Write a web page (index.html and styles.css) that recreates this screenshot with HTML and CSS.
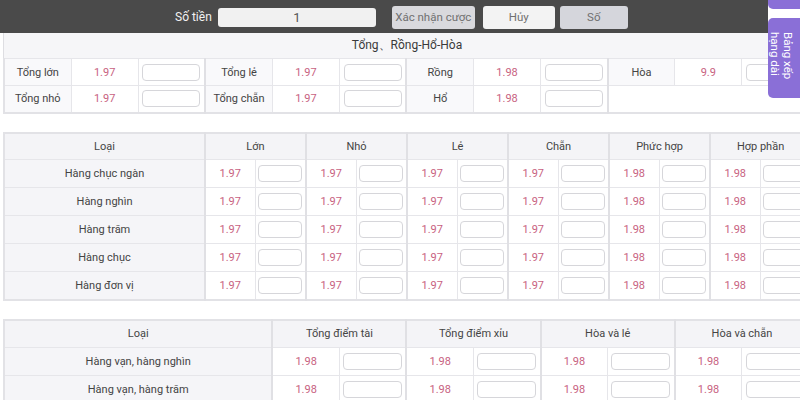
FILE: index.html
```html
<!DOCTYPE html>
<html lang="vi">
<head>
<meta charset="utf-8">
<title>Tổng、Rồng-Hổ-Hòa</title>
<link rel="stylesheet" href="styles.css">
</head>
<body>
<div class="topbar">
  <span class="money-label">Số tiền</span>
  <div class="money-input">1</div>
  <button class="btn btn-confirm">Xác nhận cược</button>
  <button class="btn btn-cancel">Hủy</button>
  <button class="btn btn-num">Số</button>
</div>

<div class="side-tabs">
  <div class="tab tab-top"></div>
  <div class="tab tab-rank">Bảng xếp<br>hạng dài</div>
</div>

<main class="content">
  <section class="block">
    <div class="block-title">Tổng、Rồng-Hổ-Hòa</div>
    <table class="grid grid-sum">
      <colgroup>
        <col class="c67"><col class="c67"><col class="c67">
        <col class="c67"><col class="c67"><col class="c67">
        <col class="c67"><col class="c67"><col class="c67">
        <col class="c67"><col class="c67"><col class="c67">
      </colgroup>
      <tr>
        <td class="lbl">Tổng lớn</td><td class="odds">1.97</td><td class="inp"><input class="bet-input" type="text"></td>
        <td class="lbl gs">Tổng lẻ</td><td class="odds">1.97</td><td class="inp"><input class="bet-input" type="text"></td>
        <td class="lbl gs">Rồng</td><td class="odds">1.98</td><td class="inp"><input class="bet-input" type="text"></td>
        <td class="lbl gs">Hòa</td><td class="odds">9.9</td><td class="inp"><input class="bet-input" type="text"></td>
      </tr>
      <tr>
        <td class="lbl">Tổng nhỏ</td><td class="odds">1.97</td><td class="inp"><input class="bet-input" type="text"></td>
        <td class="lbl gs">Tổng chẵn</td><td class="odds">1.97</td><td class="inp"><input class="bet-input" type="text"></td>
        <td class="lbl gs">Hổ</td><td class="odds">1.98</td><td class="inp"><input class="bet-input" type="text"></td>
        <td class="empty gs" colspan="3"></td>
      </tr>
    </table>
  </section>

  <section class="block">
    <table class="grid grid-pos">
      <colgroup>
        <col class="c201">
        <col class="c50"><col class="c51"><col class="c50"><col class="c51">
        <col class="c50"><col class="c51"><col class="c50"><col class="c51">
        <col class="c50"><col class="c51"><col class="c50"><col class="c51">
      </colgroup>
      <tr class="head">
        <th>Loại</th><th class="gs" colspan="2">Lớn</th><th class="gs" colspan="2">Nhỏ</th><th class="gs" colspan="2">Lẻ</th>
        <th class="gs" colspan="2">Chẵn</th><th class="gs" colspan="2">Phức hợp</th><th class="gs" colspan="2">Hợp phần</th>
      </tr>
      <tr>
        <td class="lbl">Hàng chục ngàn</td>
        <td class="odds gs">1.97</td><td class="inp"><input class="bet-input" type="text"></td>
        <td class="odds gs">1.97</td><td class="inp"><input class="bet-input" type="text"></td>
        <td class="odds gs">1.97</td><td class="inp"><input class="bet-input" type="text"></td>
        <td class="odds gs">1.97</td><td class="inp"><input class="bet-input" type="text"></td>
        <td class="odds gs">1.98</td><td class="inp"><input class="bet-input" type="text"></td>
        <td class="odds gs">1.98</td><td class="inp"><input class="bet-input" type="text"></td>
      </tr>
      <tr>
        <td class="lbl">Hàng nghìn</td>
        <td class="odds gs">1.97</td><td class="inp"><input class="bet-input" type="text"></td>
        <td class="odds gs">1.97</td><td class="inp"><input class="bet-input" type="text"></td>
        <td class="odds gs">1.97</td><td class="inp"><input class="bet-input" type="text"></td>
        <td class="odds gs">1.97</td><td class="inp"><input class="bet-input" type="text"></td>
        <td class="odds gs">1.98</td><td class="inp"><input class="bet-input" type="text"></td>
        <td class="odds gs">1.98</td><td class="inp"><input class="bet-input" type="text"></td>
      </tr>
      <tr>
        <td class="lbl">Hàng trăm</td>
        <td class="odds gs">1.97</td><td class="inp"><input class="bet-input" type="text"></td>
        <td class="odds gs">1.97</td><td class="inp"><input class="bet-input" type="text"></td>
        <td class="odds gs">1.97</td><td class="inp"><input class="bet-input" type="text"></td>
        <td class="odds gs">1.97</td><td class="inp"><input class="bet-input" type="text"></td>
        <td class="odds gs">1.98</td><td class="inp"><input class="bet-input" type="text"></td>
        <td class="odds gs">1.98</td><td class="inp"><input class="bet-input" type="text"></td>
      </tr>
      <tr>
        <td class="lbl">Hàng chục</td>
        <td class="odds gs">1.97</td><td class="inp"><input class="bet-input" type="text"></td>
        <td class="odds gs">1.97</td><td class="inp"><input class="bet-input" type="text"></td>
        <td class="odds gs">1.97</td><td class="inp"><input class="bet-input" type="text"></td>
        <td class="odds gs">1.97</td><td class="inp"><input class="bet-input" type="text"></td>
        <td class="odds gs">1.98</td><td class="inp"><input class="bet-input" type="text"></td>
        <td class="odds gs">1.98</td><td class="inp"><input class="bet-input" type="text"></td>
      </tr>
      <tr>
        <td class="lbl">Hàng đơn vị</td>
        <td class="odds gs">1.97</td><td class="inp"><input class="bet-input" type="text"></td>
        <td class="odds gs">1.97</td><td class="inp"><input class="bet-input" type="text"></td>
        <td class="odds gs">1.97</td><td class="inp"><input class="bet-input" type="text"></td>
        <td class="odds gs">1.97</td><td class="inp"><input class="bet-input" type="text"></td>
        <td class="odds gs">1.98</td><td class="inp"><input class="bet-input" type="text"></td>
        <td class="odds gs">1.98</td><td class="inp"><input class="bet-input" type="text"></td>
      </tr>
    </table>
  </section>

  <section class="block">
    <table class="grid grid-pair">
      <colgroup>
        <col class="c268">
        <col class="c67"><col class="c67"><col class="c67"><col class="c67">
        <col class="c67"><col class="c67"><col class="c67"><col class="c67">
      </colgroup>
      <tr class="head">
        <th>Loại</th><th class="gs" colspan="2">Tổng điểm tài</th><th class="gs" colspan="2">Tổng điểm xỉu</th>
        <th class="gs" colspan="2">Hòa và lẻ</th><th class="gs" colspan="2">Hòa và chẵn</th>
      </tr>
      <tr>
        <td class="lbl">Hàng vạn, hàng nghìn</td>
        <td class="odds gs">1.98</td><td class="inp"><input class="bet-input" type="text"></td>
        <td class="odds gs">1.98</td><td class="inp"><input class="bet-input" type="text"></td>
        <td class="odds gs">1.98</td><td class="inp"><input class="bet-input" type="text"></td>
        <td class="odds gs">1.98</td><td class="inp"><input class="bet-input" type="text"></td>
      </tr>
      <tr>
        <td class="lbl">Hàng vạn, hàng trăm</td>
        <td class="odds gs">1.98</td><td class="inp"><input class="bet-input" type="text"></td>
        <td class="odds gs">1.98</td><td class="inp"><input class="bet-input" type="text"></td>
        <td class="odds gs">1.98</td><td class="inp"><input class="bet-input" type="text"></td>
        <td class="odds gs">1.98</td><td class="inp"><input class="bet-input" type="text"></td>
      </tr>
    </table>
  </section>
</main>
</body>
</html>
```

FILE: styles.css
```css
html, body {
  margin: 0;
  padding: 0;
  background: #ffffff;
  overflow: hidden;
}

body {
  width: 800px;
  height: 400px;
  position: relative;
  font-family: Roboto, "Liberation Sans", sans-serif;
  font-size: 11px;
  color: #444444;
}

/* ---------- top bar ---------- */
.topbar {
  width: 768px;
  height: 33px;
  box-sizing: border-box;
  background: #4a4a4a;
  display: flex;
  align-items: center;
  padding: 1px 0 0 175px;
}

.money-label {
  font-size: 12px;
  color: #f2f2f2;
  margin-right: 6px;
}

.money-input {
  width: 158px;
  height: 19px;
  line-height: 19px;
  background: #f1f1f1;
  border-radius: 3px;
  text-align: center;
  font-size: 13px;
  color: #555;
  margin-right: 16px;
}

.btn {
  height: 23px;
  border: none;
  border-radius: 3px;
  font-family: Roboto, "Liberation Sans", sans-serif;
  font-size: 11.5px;
  color: #707070;
  padding: 0;
}

.btn-confirm {
  width: 83px;
  background: #d9d9dd;
  margin-right: 8px;
}

.btn-cancel {
  width: 72px;
  background: #f3f3f3;
  margin-right: 5px;
}

.btn-num {
  width: 68px;
  background: #d5d6dc;
}

/* ---------- side tabs ---------- */
.side-tabs {
  position: absolute;
  top: 0;
  right: 0;
  width: 32px;
  display: flex;
  flex-direction: column;
  gap: 9px;
}

.tab {
  background: #8a6fd7;
  border-radius: 5px 0 0 5px;
}

.tab-top {
  height: 9px;
  border-radius: 0 0 0 5px;
}

.tab-rank {
  height: 80px;
  box-sizing: border-box;
  writing-mode: vertical-rl;
  color: #ffffff;
  font-size: 11.5px;
  line-height: 13px;
  padding: 14px 6px 0 0;
}

/* ---------- content ---------- */
.content {
  margin-left: 3px;
  width: 807px;
}

.block + .block {
  margin-top: 18px;
}

.block-title {
  height: 25px;
  line-height: 25px;
  box-sizing: border-box;
  background: #f6f6f8;
  border-left: 1px solid #dedee2;
  text-align: center;
  font-size: 12px;
  color: #3a3a3a;
}

.grid {
  border-collapse: collapse;
  table-layout: fixed;
  width: 807px;
  border: 2px solid #e2e2e6;
}

.grid-sum {
  border-top: 1px solid #e2e2e6;
}

.c50 { width: 50px; }
.c51 { width: 51px; }
.c67 { width: 67px; }
.c201 { width: 201px; }
.c268 { width: 268px; }

.grid tr {
  height: 28px;
}

.grid-sum tr,
.grid-pos tr.head {
  height: 27px;
}

.grid th,
.grid td {
  border: 1px solid #e6e6ea;
  padding: 0;
  text-align: center;
  font-weight: normal;
  white-space: nowrap;
  overflow: hidden;
}

.grid th {
  background: #f4f4f7;
  color: #444444;
}

.grid .gs {
  border-left: 2px solid #e0e0e4;
}

.lbl {
  background: #f5f5f8;
  color: #444444;
}

.grid-sum .lbl {
  background: #f9f9fb;
}

.odds {
  background: #ffffff;
  color: #c8627f;
}

.inp {
  background: #ffffff;
}

.grid-sum .empty {
  background: #ffffff;
  border-top: none;
  border-right: none;
  border-left: 2px solid #e0e0e4;
}

.bet-input {
  display: block;
  margin: 0 auto;
  box-sizing: border-box;
  height: 17px;
  border: 1px solid #d6d6da;
  border-radius: 4px;
  background: #ffffff;
  padding: 0;
  outline: none;
}

.grid-sum .bet-input { width: 58px; }
.grid-pos .bet-input { width: 44px; }
.grid-pair .bet-input { width: 59px; }
```
